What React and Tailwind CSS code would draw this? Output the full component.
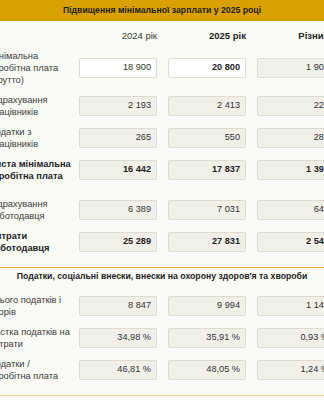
import React from "react";

const rowsTop = [
  { label: "Мінімальна заробітна плата (брутто)", values: ["18 900", "20 800", "1 900"], editable: true },
  { label: "Відрахування працівників", values: ["2 193", "2 413", "220"] },
  { label: "Податки з працівників", values: ["265", "550", "285"] },
  { label: "Чиста мінімальна заробітна плата", values: ["16 442", "17 837", "1 395"], bold: true },
  { spacer: true },
  { label: "Відрахування роботодавця", values: ["6 389", "7 031", "642"] },
  { label: "Витрати роботодавця", values: ["25 289", "27 831", "2 542"], bold: true },
];

const rowsBottom = [
  { label: "Всього податків і зборів", values: ["8 847", "9 994", "1 147"] },
  { label: "Частка податків на витрати", values: ["34,98 %", "35,91 %", "0,93 %"] },
  { label: "Податки / заробітна плата", values: ["46,81 %", "48,05 %", "1,24 %"] },
];

const Cell = ({ value, white, bold }) => (
  <div
    className={`w-[78px] h-[20px] shrink-0 rounded-[2px] border border-[#dcdcd2] flex items-center justify-end pr-[5px] text-[9.2px] ${
      white ? "bg-white" : "bg-[#f0f0e8]"
    } ${bold ? "font-bold text-[#1f1f1f]" : "text-[#333]"}`}>
    {value}
  </div>
);

const Row = ({ row }) => {
  if (row.spacer) return <div className="h-[8px]" />;
  return (
    <div className="flex items-center py-[4px] min-h-[32px]">
      <div
        className={`w-[90px] shrink-0 pr-[6px] text-[9.3px] leading-[12px] ${
          row.bold ? "font-bold text-[#1f1f1f]" : "text-[#3a3a3a]"
        }`}>
        {row.label}
      </div>
      <div className="flex gap-[11px]">
        {row.values.map((v, i) => (
          <Cell
            key={i}
            value={v}
            white={row.editable && i < 2}
            bold={row.bold || (row.editable && i === 1)}
          />
        ))}
      </div>
    </div>
  );
};

export default function App() {
  return (
    <div
      className="w-[324px] h-[400px] overflow-hidden bg-[#fafaf6]"
      style={{ fontFamily: '"Liberation Sans", Arial, sans-serif' }}>
      {/* Заголовок */}
      <div className="h-[21px] bg-[#d8a000] flex items-center justify-center text-[8.7px] font-bold text-[#1f1f1f]">
        Підвищення мінімальної зарплати у 2025 році
      </div>

      <div className="ml-[-11px] w-[346px]">
        {/* Шапка колонок */}
        <div className="flex pt-[9px] pb-[4px] text-[9.5px] leading-[12px]">
          <div className="w-[90px] shrink-0" />
          <div className="flex gap-[11px]">
            <div className="w-[78px] text-right text-[#3a3a3a]">2024 рік</div>
            <div className="w-[78px] text-right font-bold text-[#1f1f1f]">2025 рік</div>
            <div className="w-[78px] text-right font-bold text-[#1f1f1f]">Різниця</div>
          </div>
        </div>

        {rowsTop.map((r, i) => (
          <Row key={i} row={r} />
        ))}

        <div className="mt-[9px] border-t border-[#e2b023]" />
      </div>

      <div className="pt-[2px] pb-[8px] text-center text-[8.7px] leading-[12px] font-bold text-[#1f1f1f]">
        Податки, соціальні внески, внески на охорону здоров'я та хвороби
      </div>

      <div className="ml-[-11px] w-[346px]">
        {rowsBottom.map((r, i) => (
          <Row key={i} row={r} />
        ))}
        <div className="mt-[9px] border-t border-[#ead39a]" />
      </div>
    </div>
  );
}
